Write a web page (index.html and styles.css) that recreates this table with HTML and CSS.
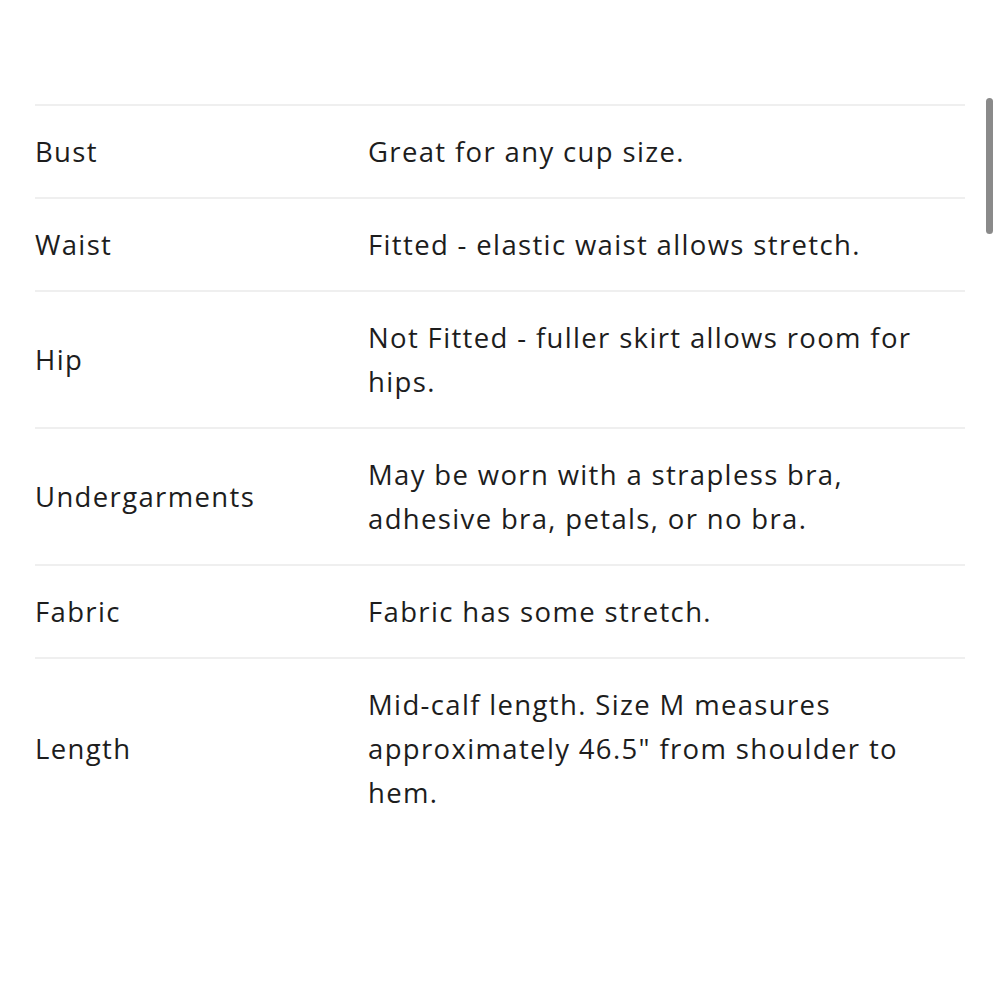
FILE: index.html
```html
<!DOCTYPE html>
<html>
<head>
<meta charset="utf-8">
<link rel="stylesheet" href="styles.css">
</head>
<body>
<div class="page">
  <div class="specs">
    <div class="row"><div class="label">Bust</div><div class="value">Great for any cup size.</div></div>
    <div class="row"><div class="label">Waist</div><div class="value">Fitted - elastic waist allows stretch.</div></div>
    <div class="row"><div class="label">Hip</div><div class="value">Not Fitted - fuller skirt allows room for hips.</div></div>
    <div class="row"><div class="label">Undergarments</div><div class="value">May be worn with a strapless bra, adhesive bra, petals, or no bra.</div></div>
    <div class="row"><div class="label">Fabric</div><div class="value">Fabric has some stretch.</div></div>
    <div class="row"><div class="label">Length</div><div class="value">Mid-calf length. Size M measures approximately 46.5" from shoulder to hem.</div></div>
  </div>
  <div class="scrollbar"></div>
</div>
</body>
</html>
```
FILE: styles.css
```css
html, body {
  margin: 0;
  padding: 0;
  background: #fff;
}
.page {
  position: relative;
  width: 1000px;
  height: 1000px;
  font-family: "Open Sans", Lato, sans-serif;
  color: #1d1d1d;
}
.specs {
  padding-top: 104px;
  margin-left: 35px;
  width: 930px;
}
.row {
  display: flex;
  align-items: center;
  border-top: 2px solid #efefef;
  padding: 24px 0 23px;
  font-size: 27.5px;
  line-height: 44px;
  letter-spacing: 1.35px;
}
.label {
  width: 333px;
  flex: none;
}
.value {
  flex: 1;
  padding-right: 28px;
}
.scrollbar {
  position: absolute;
  left: 986px;
  top: 98px;
  width: 7px;
  height: 136px;
  border-radius: 4px;
  background: #8a8a8a;
}
```
